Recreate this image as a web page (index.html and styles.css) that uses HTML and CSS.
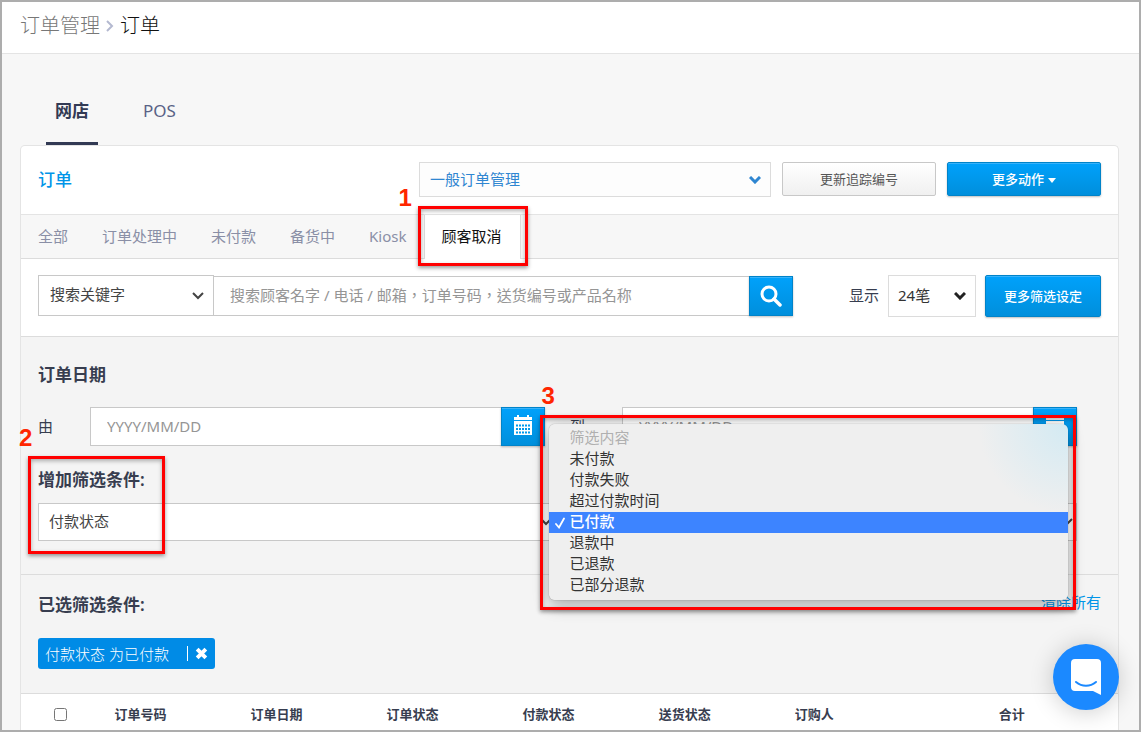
FILE: index.html
```html
<!DOCTYPE html>
<html lang="zh-CN">
<head>
<meta charset="utf-8">
<meta name="viewport" content="width=device-width, initial-scale=1">
<title>订单管理</title>
<link rel="stylesheet" href="styles.css">
</head>
<body>
<svg class="defs" aria-hidden="true">
  <symbol id="chevron" viewBox="0 0 12 8"><path d="M1 1l5 5 5-5" fill="none" stroke="currentColor"/></symbol>
  <symbol id="calendar" viewBox="0 0 18 20">
    <path d="M0 2h3V0h2v2h8V0h2v2h3v3H0z" fill="currentColor"/>
    <path d="M0 6h18v14H0z" fill="currentColor"/>
    <path d="M2 10.500h14M2 14h14M2 17.500h14" stroke="#0099ec" stroke-width="2" stroke-dasharray="2 1"/>
  </symbol>
</svg>
<div class="page">
  <header class="topbar">
    <nav class="crumbs">
      <a href="#">订单管理</a>
      <svg class="crumb-sep" viewBox="0 0 8 12"><path d="M1 1l5 5-5 5" fill="none" stroke="currentColor" stroke-width="2"/></svg>
      <span>订单</span>
    </nav>
  </header>

  <nav class="channels">
    <a class="channel channel-active" href="#">网店</a>
    <a class="channel" href="#">POS</a>
  </nav>

  <main class="card">
    <div class="card-head">
      <h1 class="card-title">订单</h1>
      <div class="select select-mode">
        <select aria-label="订单管理模式"><option>一般订单管理</option></select>
        <svg class="chevron"><use href="#chevron"/></svg>
      </div>
      <button class="btn btn-plain" type="button">更新追踪编号</button>
      <button class="btn btn-blue" type="button">更多动作<span class="caret"></span></button>
    </div>

    <nav class="tabs">
      <a class="tab" href="#">全部</a>
      <a class="tab" href="#">订单处理中</a>
      <a class="tab" href="#">未付款</a>
      <a class="tab" href="#">备货中</a>
      <a class="tab" href="#">Kiosk</a>
      <a class="tab tab-active" href="#">顾客取消<span class="mark mark-tab"><b class="mark-no">1</b></span></a>
    </nav>

    <form class="search-row">
      <div class="search">
        <div class="select select-field">
          <select aria-label="搜索栏位"><option>搜索关键字</option></select>
          <svg class="chevron"><use href="#chevron"/></svg>
        </div>
        <input class="input search-input" lang="zh-Hant" type="text" aria-label="搜索" placeholder="搜索顾客名字 / 电话 / 邮箱，订单号码，送货编号或产品名称">
        <button class="btn btn-icon" type="button" aria-label="搜索">
          <svg class="icon-search" viewBox="0 0 22 22"><circle cx="9" cy="9" r="7" fill="none" stroke="currentColor" stroke-width="3"/><path d="M14 14l6 6" stroke="currentColor" stroke-width="3.500" stroke-linecap="round"/></svg>
        </button>
      </div>
      <label class="show-label" for="per-page">显示</label>
      <div class="select select-count">
        <select id="per-page"><option>24笔</option></select>
        <svg class="chevron"><use href="#chevron"/></svg>
      </div>
      <button class="btn btn-blue btn-more" type="button">更多筛选设定</button>
    </form>

    <section class="filters">
      <h2 class="heading">订单日期</h2>
      <div class="dates">
        <div class="date">
          <label class="date-label" for="date-from">由</label>
          <input class="input date-input" id="date-from" type="text" placeholder="YYYY/MM/DD">
          <button class="btn btn-icon btn-cal" type="button" aria-label="选择开始日期"><svg class="icon-cal"><use href="#calendar"/></svg></button>
        </div>
        <div class="date">
          <label class="date-label" for="date-to">到</label>
          <input class="input date-input" id="date-to" type="text" placeholder="YYYY/MM/DD">
          <button class="btn btn-icon btn-cal" type="button" aria-label="选择结束日期"><svg class="icon-cal"><use href="#calendar"/></svg></button>
        </div>
      </div>
      <h2 class="heading">增加筛选条件:</h2>
      <div class="conditions">
        <div class="select select-cond">
          <select aria-label="筛选条件"><option>付款状态</option></select>
          <svg class="chevron"><use href="#chevron"/></svg>
          <span class="mark mark-cond"><b class="mark-no">2</b></span>
        </div>
        <div class="select select-cond">
          <select aria-label="筛选内容"><option>已付款</option></select>
          <svg class="chevron"><use href="#chevron"/></svg>
          <div class="mark mark-menu"><b class="mark-no">3</b></div>
          <ul class="menu" role="listbox" aria-label="筛选内容">
            <li class="option option-off" role="option" aria-disabled="true">筛选内容</li>
            <li class="option" role="option">未付款</li>
            <li class="option" role="option">付款失败</li>
            <li class="option" role="option">超过付款时间</li>
            <li class="option option-on" role="option" aria-selected="true"><svg class="tick" viewBox="0 0 10 12"><path d="M1 7l3 3.500L9 1.500" fill="none" stroke="currentColor" stroke-width="1.800" stroke-linecap="round"/></svg>已付款</li>
            <li class="option" role="option">退款中</li>
            <li class="option" role="option">已退款</li>
            <li class="option" role="option">已部分退款</li>
          </ul>
        </div>
      </div>
    </section>

    <section class="selected">
      <div class="selected-head">
        <h2 class="heading">已选筛选条件:</h2>
        <a class="clear" href="#">清除所有</a>
      </div>
      <div class="chip">
        <span>付款状态 为已付款</span>
        <button class="chip-x" type="button" aria-label="移除">
          <svg viewBox="0 0 12 12"><path d="M2 2l8 8M10 2l-8 8" stroke="currentColor" stroke-width="3.600"/></svg>
        </button>
      </div>
    </section>

    <table class="orders">
      <thead>
        <tr>
          <th class="col-check"><input type="checkbox" aria-label="全选"></th>
          <th>订单号码</th>
          <th>订单日期</th>
          <th>订单状态</th>
          <th>付款状态</th>
          <th>送货状态</th>
          <th class="col-buyer">订购人</th>
          <th class="col-total">合计</th>
        </tr>
      </thead>
    </table>
  </main>
  <button class="chat" type="button" aria-label="客服对话">
    <svg viewBox="0 0 30 36"><path d="M4 0h22a4 4 0 0 1 4 4v32l-8-4H4a4 4 0 0 1-4-4V4a4 4 0 0 1 4-4z" fill="#fff"/><path d="M5 23c6 5 14 5 20 0" fill="none" stroke="#1b89ff" stroke-width="2" stroke-linecap="round"/></svg>
  </button>
</div>
</body>
</html>
```

FILE: styles.css
```css
* { box-sizing: border-box; }

body {
  margin: 0;
  background: #f7f7f7;
  color: #373d4f;
  font: 15px/24px "Noto Sans", "Noto Sans CJK SC", sans-serif;
}

a { color: inherit; text-decoration: none; }

button, input, select { font: inherit; margin: 0; }

.defs { position: absolute; width: 0; height: 0; }

.page {
  display: flex;
  flex-direction: column;
  position: relative;
  min-height: 100vh;
  border: 2px solid #adadad;
  overflow: hidden;
}

/* breadcrumb bar */
.topbar {
  padding: 12px 18px 15px;
  background: #fff;
  border-bottom: 1px solid #e4e4e4;
}

.crumbs {
  display: flex;
  align-items: center;
  gap: 6px;
  font-size: 20px;
  font-weight: 300;
  color: #111;
}

.crumbs a { color: #777; }

.crumb-sep { width: 8px; height: 12px; color: #b4b9d0; }

/* sales channel tabs */
.channels {
  display: flex;
  gap: 36px;
  padding: 45px 44px 0;
  font-size: 17px;
}

.channel {
  padding: 0 9px 19px;
  border-bottom: 3px solid transparent;
  color: #596286;
}

.channel-active {
  border-color: #323a54;
  color: #323a54;
  font-weight: 700;
}

.card {
  flex: 1;
  margin: 0 20px 0 18px;
  background: #fff;
  border: 1px solid #e4e4e4;
  border-bottom: 0;
  border-radius: 5px 5px 0 0;
}

.card-head {
  display: flex;
  gap: 11px;
  padding: 16px 17px 17px;
  border-bottom: 1px solid #e4e4e4;
}

.card-title {
  flex: 1;
  margin: 0;
  color: #0095e8;
  font-size: 17px;
  font-weight: 500;
  line-height: 35px;
}

/* drop-downs */
.select { position: relative; }

.select select {
  display: block;
  width: 100%;
  height: 100%;
  padding: 0 10px 2px;
  appearance: none;
  background: #fff;
  border: 1px solid #c8c8c8;
  border-radius: 0;
  color: #444;
}

.chevron {
  position: absolute;
  top: 50%;
  right: 10px;
  width: 12px;
  height: 8px;
  margin-top: -4px;
  color: #444;
  stroke-width: 2;
  pointer-events: none;
}

.select-mode { width: 352px; height: 35px; }
.select-mode select { background: #fdfdfd; border-color: #dcdcdc; color: #2f86d1; }
.select-mode .chevron { color: #2f86d1; stroke-width: 3; }

.select-field { width: 176px; height: 41px; }
.select-field select { padding: 0 11px 4px; }

.select-count { width: 88px; height: 42px; margin-right: 9px; }
.select-count select { padding: 0 9px 2px; border-color: #dcdcdc; color: #333; }
.select-count .chevron { color: #222; stroke-width: 3; }

.select-cond { height: 38px; }
.select-cond .chevron { right: 4px; }

/* buttons */
.btn {
  width: 154px;
  height: 34px;
  padding: 0;
  border: 1px solid #0083c9;
  border-radius: 2px;
  font-size: 13px;
}

.btn-blue, .btn-icon {
  background: linear-gradient(#00a1fb, #008fdc);
  box-shadow: inset 0 1px #38b2fa, 0 1px 2px rgba(0, 0, 0, .25);
  color: #fff;
  font-weight: 500;
}

.btn-plain {
  background: linear-gradient(#fff, #f0f0f0);
  border-color: #c8c8c8;
  color: #555;
}

.btn-icon {
  display: flex;
  align-items: center;
  justify-content: center;
  flex: none;
  width: 44px;
  height: auto;
  border-radius: 0;
}

.btn-cal { padding-bottom: 3px; }

.btn-more { width: 116px; height: 42px; }

.caret {
  display: inline-block;
  margin-left: 4px;
  border: 4px solid transparent;
  border-top: 5px solid #fff;
  border-bottom: 0;
  vertical-align: middle;
}

.icon-search { width: 22px; height: 22px; }
.icon-cal { width: 18px; height: 20px; }

/* order status tabs */
.tabs {
  display: flex;
  background: #f7f7f7;
  border-bottom: 1px solid #dcdcdc;
}

.tab {
  position: relative;
  padding: 9px 17px 10px;
  color: #8a8fa6;
}

.tab-active {
  margin-bottom: -1px;
  padding: 9px 18px 10px 17px;
  background: #fff;
  border: solid #dcdcdc;
  border-width: 0 1px;
  color: #111;
}

/* search */
.search-row {
  display: flex;
  align-items: flex-start;
  padding: 16px 17px 19px;
  border-bottom: 1px solid #dcdcdc;
}

.search { display: flex; flex: 1; margin-right: 56px; }

.input {
  flex: 1;
  min-width: 0;
  padding: 0 16px 2px;
  background: #fff;
  border: 1px solid #c8c8c8;
  border-radius: 0;
  border-right: 0;
  color: #444;
}

.input::placeholder { color: #959595; opacity: 1; }

.search-input {
  margin-top: 1px;
  border-left: 0;
  font-family: "Noto Sans", "Noto Sans CJK TC", sans-serif;
}

.search .btn-icon { margin-top: 1px; }

.show-label { margin-right: 9px; line-height: 40px; }

/* filter panel */
.filters {
  padding: 26px 41px 33px 17px;
  background: #f4f4f4;
  border-bottom: 1px solid #dcdcdc;
}

.heading {
  margin: 0;
  font-size: 17px;
  font-weight: 600;
  line-height: 24px;
}

.dates {
  display: grid;
  grid-template-columns: 1fr 1fr;
  gap: 77px;
  margin: 20px 0 22px 52px;
}

.date { display: flex; height: 39px; position: relative; }

.date-label {
  width: 52px;
  margin-left: -52px;
  line-height: 39px;
}

.conditions {
  display: grid;
  grid-template-columns: 1fr 1fr;
  gap: 4px;
  margin-top: 11px;
}

/* open option list */
.menu {
  position: absolute;
  z-index: 3;
  top: -79px;
  right: 9px;
  left: -11px;
  margin: 0;
  padding: 4px 0;
  list-style: none;
  background: radial-gradient(circle at 100% 0, #d3eaf3, #efefef 90px);
  border-radius: 6px;
  box-shadow: 0 0 1px rgba(0, 0, 0, .5), 0 6px 16px rgba(0, 0, 0, .3);
  color: #333;
}

.option { position: relative; padding: 0 0 2px 21px; line-height: 19px; }
.option-off { color: #b0b0b0; }
.option-on { background: #3d84ff; color: #fff; font-weight: 500; }

.tick { position: absolute; top: 5px; left: 6px; width: 10px; height: 12px; }

/* numbered callouts */
.mark {
  position: absolute;
  z-index: 4;
  border: 3px solid #f00;
  box-shadow: 0 2px 4px rgba(0, 0, 0, .4), inset 0 2px 4px rgba(0, 0, 0, .3);
  pointer-events: none;
}

.mark-no {
  position: absolute;
  color: #ff2600;
  font: 700 24px/24px "Liberation Sans", sans-serif;
}

.mark-tab { top: -9px; right: -8px; bottom: -7px; left: -7px; }
.mark-tab .mark-no { top: -23px; left: -22px; }

.mark-cond { top: -47px; bottom: -13px; left: -10px; width: 137px; }
.mark-cond .mark-no { top: -33px; left: -12px; }

.mark-menu { top: -88px; right: 1px; bottom: -69px; left: -20px; }
.mark-menu .mark-no { top: -34px; left: -1px; }

/* applied filters */
.selected {
  padding: 18px 17px 24px;
  background: #f4f4f4;
  border-bottom: 1px solid #dcdcdc;
}

.selected-head {
  display: flex;
  justify-content: space-between;
  margin-bottom: 21px;
}

.clear { color: #0095e8; line-height: 18px; }

.chip {
  display: inline-flex;
  align-items: center;
  height: 31px;
  padding: 0 7px;
  background: #008be6;
  border-radius: 3px;
  color: #fff;
  font-weight: 300;
  vertical-align: top;
}

.chip-x {
  display: flex;
  margin-left: 18px;
  padding: 1px 0 1px 7px;
  background: none;
  border: 0;
  border-left: 1px solid #fff;
  color: #fff;
}

.chip-x svg { width: 13px; height: 13px; }

/* orders table */
.orders {
  width: 100%;
  border-collapse: collapse;
  table-layout: fixed;
}

.orders th {
  width: 12.4%;
  padding: 10px 8px 6px;
  font-size: 13px;
  font-weight: 600;
  line-height: 20px;
  text-align: left;
}

.orders .col-check { width: 7.8%; padding-left: 33px; }
.orders .col-buyer { width: 18.6%; }
.orders .col-total { width: auto; }

.col-check input { display: block; width: 13px; height: 13px; }

.chat {
  position: absolute;
  z-index: 5;
  right: 20px;
  bottom: 20px;
  width: 66px;
  height: 66px;
  padding: 0;
  background: #1b89ff;
  border: 0;
  border-radius: 50%;
  box-shadow: 0 2px 24px rgba(0, 0, 0, .2);
}

.chat svg { display: block; width: 30px; height: 36px; margin: 0 auto; }
```
